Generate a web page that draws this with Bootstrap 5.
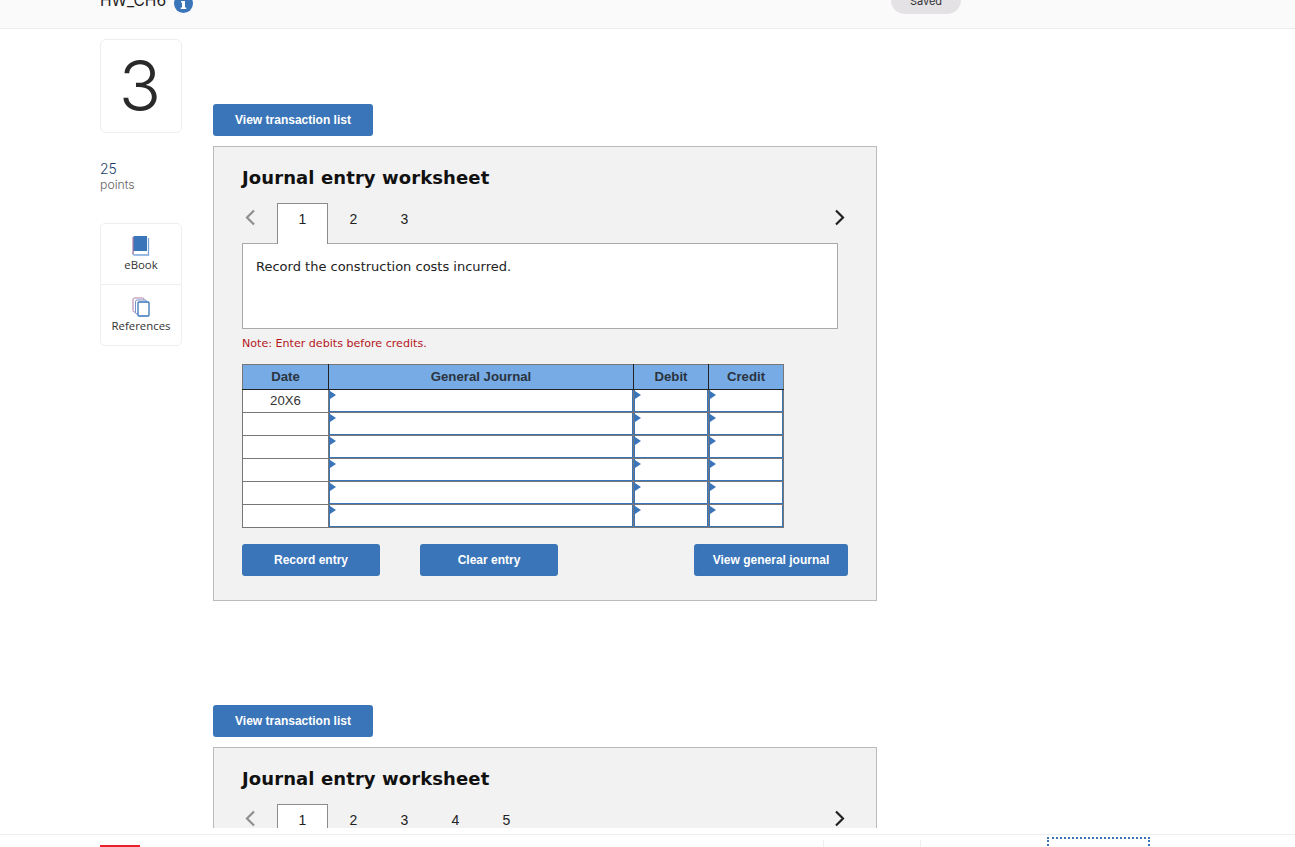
<!DOCTYPE html>
<html lang="en"><head><meta charset="utf-8"><title>HW_CH6</title>
<link href="https://cdn.jsdelivr.net/npm/bootstrap@5.3.0/dist/css/bootstrap.min.css" rel="stylesheet">
<style>
html,body{height:847px;overflow:hidden;background:#fff}
body{font-family:"Inter","Liberation Sans",sans-serif;color:#222}
.shell{height:847px}
.topbar{height:29px;background:#fbfafb;border-bottom:1px solid #ececec;padding-left:100px;flex:none;overflow:hidden}
.hw-title{font-size:15.6px;line-height:20px;margin-top:-9px;color:#222;width:74px}
.info-dot{width:19px;height:19px;margin-top:-6px;flex:none}
.saved-pill{width:70px;height:14px;margin-left:698px;background:#e4e2e5;border-radius:0 0 14px 14px;font-size:11px;line-height:3px;text-align:center;flex:none;color:#333;overflow:hidden}
.main-scroll{height:799px;flex:none;overflow:hidden;padding-left:100px}
.side-col{width:82px;flex:none;padding-top:10px}
.num-box{height:94px;border:1px solid #eee;border-radius:6px;font-size:70px;font-weight:300;line-height:91px;text-align:center;color:#2a2a2a;padding-right:2px}
.pts{margin-top:27px;font-size:14px;line-height:17px;color:#1f3f66;font-weight:300}
.pts span{display:block;font-size:12.3px;line-height:15px;color:#666}
.tool-box{margin-top:31px;border:1px solid #eee;border-radius:5px;height:123px}
.tool-item{height:60px;font-size:11.4px;text-align:center;padding-top:12px;color:#333;line-height:14px;font-family:"Open Sans","Liberation Sans",sans-serif}
.tool-item+.tool-item{border-top:1px solid #eee}
.tool-item svg{display:block;margin:0 auto 2px}
.work-col{margin-left:31px;width:664px;padding-top:75px;flex:none}
.blue-btn{background:#3a75ba;border:0;border-radius:3px;color:#fff;font-family:"Liberation Sans",sans-serif;font-weight:700;font-size:12px;height:32px;padding:0;line-height:32px}
.blue-btn:hover{background:#3a75ba;color:#fff}
.w-160{width:160px}.w-138{width:138px}.w-154{width:154px}
.jpanel{margin-top:10px;background:#f2f2f2;border:1px solid #bbb;height:455px;padding:0 28px;margin-bottom:104px;font-family:"DejaVu Sans",sans-serif}
.jtitle{font-size:18px;font-weight:700;color:#111;line-height:24px;margin:19px 0 0;letter-spacing:.1px}
.tabs-row{height:41px;margin-top:13px;position:relative;z-index:1}
.chev{width:35px;flex:none;padding-left:2px;padding-top:6px}
.chev svg{display:block}
.tab-on{width:51px;height:41px;background:#fff;border:1px solid #8c8c8c;border-bottom:0;font:14px/30px "Liberation Sans",sans-serif;text-align:center;color:#222}
.tab-off{width:51px;font:14px/30px "Liberation Sans",sans-serif;text-align:center;color:#222;padding-top:1px}
.next-chev{position:absolute;left:592px;top:6px}
.prompt{width:596px;height:86px;margin-top:-1px;background:#fff;border:1px solid #aaa;padding:14px 13px;font-size:13px;line-height:18px;color:#222}
.note-line{font-size:11.1px;line-height:14px;margin-top:8px;color:#b5161e}
.jtable{margin-top:13px;width:542px;border-collapse:collapse;table-layout:fixed;font-family:"Liberation Sans",sans-serif}
.jtable th{height:25px;background:#76abe5;border:1px solid #222;border-color:#777 #222 #222 #222;font-size:13.2px;font-weight:700;text-align:center;padding:0 0 1px;color:#2b3440}
.jtable th:first-child{border-left-color:#777}.jtable th:last-child{border-right-color:#777}
.jtable td{height:23px;border:1px solid #777;padding:0;background:#fff;font-size:13.2px;text-align:center;color:#333;position:relative}
.jtable td.ent{background:#777;padding:0}
.ent input{display:block;width:100%;height:22px;border:0;border-left:1px solid #3b75b9;border-right:1px solid #3b75b9;border-bottom:1px solid #3b75b9;background:#fff;padding:0;border-radius:0;outline:0}
.ent::before{content:"";position:absolute;left:1px;top:1px;border-left:6px solid #3b75b9;border-top:4px solid transparent;border-bottom:4px solid transparent}
.action-row{margin-top:16px;width:606px}
.gap-40{margin-left:40px}.push-right{margin-left:auto}
.foot-bar{height:13px;margin-top:6px;border-top:1px solid #eee;flex:none;position:relative;overflow:hidden}
.red-tick{position:absolute;left:100px;top:10px;width:40px;height:3px;background:#e8202a}
.vline{position:absolute;top:5px;height:8px;width:1px;background:#eee}
.dot-box{position:absolute;left:1047px;top:2px;width:103px;height:20px;border:2px dotted #3a75ba}
</style></head>
<body>
<div class="shell d-flex flex-column">
<header class="topbar d-flex align-items-start">
<div class="hw-title">HW_CH6</div>
<svg class="info-dot" viewBox="0 0 19 19"><circle cx="9.5" cy="9.5" r="9.5" fill="#3a75ba"/><path d="M7 7h4v6.500h1.300V15H6.700v-1.500H8V8.500H7zM8 3.500h3v2.500H8z" fill="#fff"/></svg>
<div class="saved-pill">Saved</div>
</header>
<main class="main-scroll d-flex">
<aside class="side-col">
<div class="num-box">3</div>
<div class="pts">25<span>points</span></div>
<div class="tool-box">
<div class="tool-item"><svg width="18" height="20" viewBox="0 0 18 20"><path d="M1 1.500A1.500 1.500 0 0 1 2.500 0H15v15H2.500A1.500 1.500 0 0 0 1 16.500z" fill="#3a75ba"/><path d="M1 16.500A1.800 1.800 0 0 0 3 19h13.500V2" fill="none" stroke="#7aa6dc" stroke-width="1.300"/><path d="M1 1v17" stroke="#b07ca0" stroke-width="1.200"/></svg>eBook</div>
<div class="tool-item"><svg width="18" height="20" viewBox="0 0 18 20"><rect x="1" y="1" width="11" height="14" rx="1.500" fill="#fff" stroke="#b07ca0"/><rect x="3.500" y="3" width="11" height="14" rx="1.500" fill="#fff" stroke="#7a8fcc"/><rect x="6" y="5" width="11" height="14" rx="1" fill="#fff" stroke="#3a75ba" stroke-width="1.300"/></svg>References</div>
</div>
</aside>
<section class="work-col">
<button type="button" class="btn blue-btn w-160 d-block">View transaction list</button>
<div class="jpanel">
<h2 class="jtitle">Journal entry worksheet</h2>
<div class="tabs-row d-flex">
<div class="chev"><svg width="12" height="17" viewBox="0 0 12 17"><path d="M10 1.500 3 8.500l7 7" fill="none" stroke="#8f8f8f" stroke-width="2.200"/></svg></div>
<div class="tab-on">1</div><div class="tab-off">2</div><div class="tab-off">3</div>
<svg class="next-chev" width="12" height="17" viewBox="0 0 12 17"><path d="M2 1.500l7 7-7 7" fill="none" stroke="#222" stroke-width="2.200"/></svg>
</div>
<div class="prompt">Record the construction costs incurred.</div>
<div class="note-line">Note: Enter debits before credits.</div>
<table class="jtable">
<colgroup><col style="width:86px"><col style="width:305px"><col style="width:75px"><col style="width:75px"></colgroup>
<thead><tr><th>Date</th><th>General Journal</th><th>Debit</th><th>Credit</th></tr></thead>
<tbody>
<tr><td>20X6</td><td class="ent"><input aria-label="entry"></td><td class="ent"><input aria-label="debit"></td><td class="ent"><input aria-label="credit"></td></tr>
<tr><td></td><td class="ent"><input aria-label="entry"></td><td class="ent"><input aria-label="debit"></td><td class="ent"><input aria-label="credit"></td></tr>
<tr><td></td><td class="ent"><input aria-label="entry"></td><td class="ent"><input aria-label="debit"></td><td class="ent"><input aria-label="credit"></td></tr>
<tr><td></td><td class="ent"><input aria-label="entry"></td><td class="ent"><input aria-label="debit"></td><td class="ent"><input aria-label="credit"></td></tr>
<tr><td></td><td class="ent"><input aria-label="entry"></td><td class="ent"><input aria-label="debit"></td><td class="ent"><input aria-label="credit"></td></tr>
<tr><td></td><td class="ent"><input aria-label="entry"></td><td class="ent"><input aria-label="debit"></td><td class="ent"><input aria-label="credit"></td></tr>
</tbody></table>
<div class="action-row d-flex">
<button type="button" class="btn blue-btn w-138">Record entry</button>
<button type="button" class="btn blue-btn w-138 gap-40">Clear entry</button>
<button type="button" class="btn blue-btn w-154 push-right">View general journal</button>
</div>
</div>
<button type="button" class="btn blue-btn w-160 d-block">View transaction list</button>
<div class="jpanel">
<h2 class="jtitle">Journal entry worksheet</h2>
<div class="tabs-row d-flex">
<div class="chev"><svg width="12" height="17" viewBox="0 0 12 17"><path d="M10 1.500 3 8.500l7 7" fill="none" stroke="#8f8f8f" stroke-width="2.200"/></svg></div>
<div class="tab-on">1</div><div class="tab-off">2</div><div class="tab-off">3</div><div class="tab-off">4</div><div class="tab-off">5</div>
<svg class="next-chev" width="12" height="17" viewBox="0 0 12 17"><path d="M2 1.500l7 7-7 7" fill="none" stroke="#222" stroke-width="2.200"/></svg>
</div>
</div>
</section>
</main>
<footer class="foot-bar">
<div class="red-tick"></div><div class="vline" style="left:823px"></div><div class="vline" style="left:920px"></div><div class="dot-box"></div>
</footer>
</div>
<script src="https://cdn.jsdelivr.net/npm/bootstrap@5.3.0/dist/js/bootstrap.bundle.min.js"></script>
</body></html>
